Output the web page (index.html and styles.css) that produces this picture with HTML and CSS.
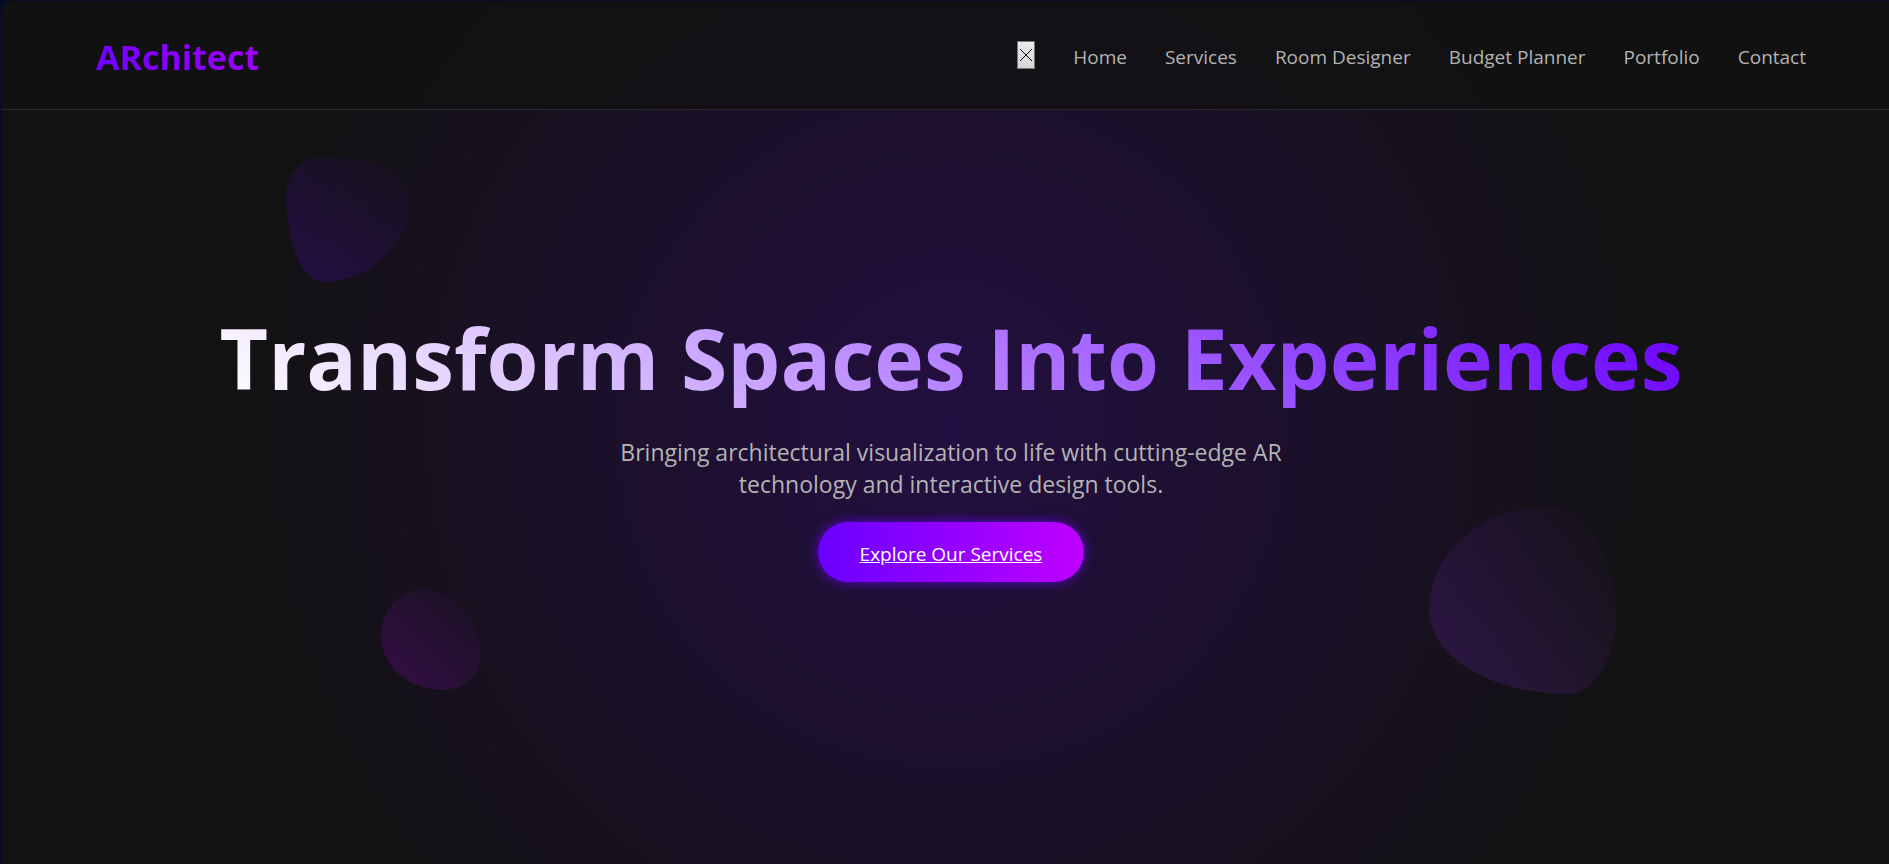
FILE: index.html
```html
<!DOCTYPE html>
<html lang="en">
<head>
<meta charset="utf-8">
<title>ARchitect</title>
<link rel="stylesheet" href="styles.css">
</head>
<body>
<div class="page">
  <header class="nav">
    <div class="logo">ARchitect</div>
    <nav class="menu" aria-label="Main">
      <button class="close" type="button" aria-label="Close menu">
        <svg width="12" height="12" viewBox="0 0 12 12" aria-hidden="true"><path d="M0 0 12 12M12 0 0 12" stroke="#000" stroke-width="1" fill="none"/><path d="M5 5h2v2h-2z"/></svg>
      </button>
      <a href="#home">Home</a>
      <a href="#services">Services</a>
      <a href="#designer">Room Designer</a>
      <a href="#budget">Budget Planner</a>
      <a href="#portfolio">Portfolio</a>
      <a href="#contact">Contact</a>
    </nav>
  </header>
  <main class="hero">
    <div class="shape shape-one"></div>
    <div class="shape shape-two"></div>
    <div class="shape shape-three"></div>
    <h1 class="title">Transform Spaces Into Experiences</h1>
    <p class="lead">Bringing architectural visualization to life with cutting-edge AR technology and interactive design tools.</p>
    <a class="cta" href="#services">Explore Our Services</a>
  </main>
</div>
</body>
</html>
```
FILE: styles.css
```css
* { box-sizing: border-box; }

body {
  margin: 0;
  padding: 1px 0 0 1px;
  background: #060b26;
  font-family: "Open Sans", "Noto Sans", sans-serif;
  overflow: hidden;
}

.page {
  position: relative;
  min-height: 100vh;
  margin-right: -12px;
  border-top-left-radius: 12px;
  overflow: hidden;
  background: #121212;
}

.nav {
  position: absolute;
  z-index: 2;
  inset: 0 0 auto;
  display: flex;
  align-items: center;
  justify-content: space-between;
  height: 109px;
  padding: 0 5%;
  background: rgba(18, 18, 18, 0.8);
  border-bottom: 1px solid rgba(255, 255, 255, 0.1);
}

.logo {
  padding-top: 4px;
  font-size: 34px;
  font-weight: 700;
  line-height: 48px;
  background: linear-gradient(45deg, #6a00ff, #a800ff);
  background-clip: text;
  color: transparent;
}

.menu {
  display: flex;
  align-items: center;
  gap: 38px;
  font-size: 19px;
  line-height: 24px;
}

.menu a {
  padding-top: 3px;
  color: #b3b3b3;
  text-decoration: none;
}

.close {
  display: grid;
  place-items: center;
  width: 18px;
  height: 28px;
  padding: 0;
  border: 1px solid #767676;
  background: linear-gradient(#ebebeb, #d6d6d6);
}

.hero {
  position: relative;
  display: flex;
  flex-direction: column;
  align-items: center;
  justify-content: center;
  min-height: 100vh;
  padding: 24px 5% 0;
  background: radial-gradient(circle at center, rgba(106, 0, 255, 0.2) 0%, transparent 70%);
  text-align: center;
}

.title {
  margin: 0 0 28px;
  font-size: 84px;
  font-weight: 700;
  line-height: 100px;
  background: linear-gradient(45deg, #fff, #6a00ff);
  background-clip: text;
  color: transparent;
}

.lead {
  max-width: 750px;
  margin: 0 0 22px;
  color: #b3b3b3;
  font-size: 23px;
  line-height: 32px;
}

.cta {
  padding: 20px 42px 16px;
  border-radius: 30px;
  background: linear-gradient(90deg, #6a00ff, #bf00ff);
  box-shadow: 0 0 12px rgba(106, 0, 255, 0.8);
  color: #fff;
  font-size: 19px;
  line-height: 24px;
}

.shape {
  position: absolute;
  opacity: 0.2;
}

.shape-one {
  top: 18%;
  left: 15%;
  width: 125px;
  height: 125px;
  border-radius: 30% 70% 70% 30% / 30% 30% 70% 70%;
  background: linear-gradient(45deg, #6a00ff, transparent);
}

.shape-two {
  right: 15%;
  bottom: 171px;
  width: 187px;
  height: 187px;
  border-radius: 63% 37% 26% 74% / 55% 58% 42% 45%;
  background: linear-gradient(45deg, #8a2be2, transparent);
}

.shape-three {
  left: 20%;
  bottom: 175px;
  width: 100px;
  height: 100px;
  border-radius: 40% 60% 38% 62% / 45% 65% 35% 55%;
  background: linear-gradient(45deg, #bf00ff, transparent);
}
```
